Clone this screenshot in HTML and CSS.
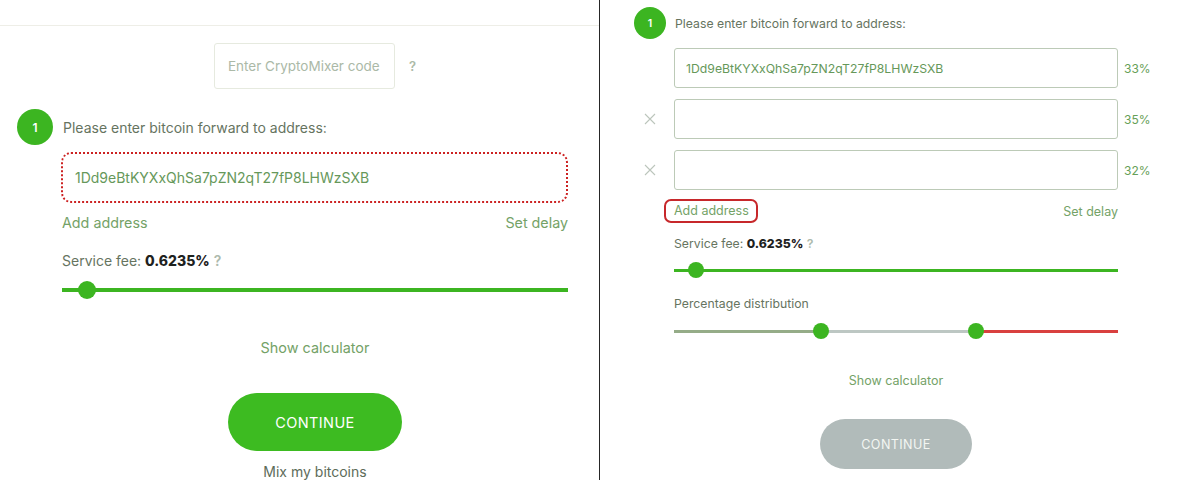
FILE: index.html
```html
<!DOCTYPE html>
<html lang="en">
<head>
<meta charset="utf-8">
<title>CryptoMixer</title>
<link rel="stylesheet" href="styles.css">
</head>
<body>
<div class="page">
  <section class="panel-left">
    <div class="topbar"></div>
    <div class="content">
      <div class="code-row">
        <div class="code-input">Enter CryptoMixer code</div>
        <span class="help">?</span>
      </div>
      <div class="step">
        <span class="badge">1</span>
        <span class="step-label">Please enter bitcoin forward to address:</span>
      </div>
      <div class="addr-box">1Dd9eBtKYXxQhSa7pZN2qT27fP8LHWzSXB</div>
      <div class="links">
        <span>Add address</span>
        <span>Set delay</span>
      </div>
      <div class="fee">Service fee: <b>0.6235%</b> <span class="q">?</span></div>
      <div class="slider">
        <span class="track"></span>
        <span class="thumb" style="left:5%"></span>
      </div>
      <div class="calc">Show calculator</div>
      <button class="continue">CONTINUE</button>
      <div class="mix">Mix my bitcoins</div>
    </div>
  </section>
  <div class="divider"></div>
  <section class="panel-right">
    <div class="r-step">
      <span class="r-badge">1</span>
      <span class="r-step-label">Please enter bitcoin forward to address:</span>
    </div>
    <div class="r-row first">
      <span class="x-cell"></span>
      <div class="r-input">1Dd9eBtKYXxQhSa7pZN2qT27fP8LHWzSXB</div>
      <span class="pct">33%</span>
    </div>
    <div class="r-row">
      <span class="x-cell"><svg width="12" height="12" viewBox="0 0 12 12"><path d="M1 1L11 11M11 1L1 11" stroke="#bcc5bc" stroke-width="1.1" fill="none"/></svg></span>
      <div class="r-input"></div>
      <span class="pct">35%</span>
    </div>
    <div class="r-row">
      <span class="x-cell"><svg width="12" height="12" viewBox="0 0 12 12"><path d="M1 1L11 11M11 1L1 11" stroke="#bcc5bc" stroke-width="1.1" fill="none"/></svg></span>
      <div class="r-input"></div>
      <span class="pct">32%</span>
    </div>
    <div class="r-body">
      <div class="r-links">
        <span class="add-hl">Add address</span>
        <span>Set delay</span>
      </div>
      <div class="r-fee">Service fee: <b>0.6235%</b> <span class="q">?</span></div>
      <div class="r-slider">
        <span class="track"></span>
        <span class="thumb" style="left:5%"></span>
      </div>
      <div class="r-label">Percentage distribution</div>
      <div class="r-dist">
        <span class="seg seg-a" style="width:33%"></span>
        <span class="seg seg-b" style="width:35%"></span>
        <span class="seg seg-c" style="width:32%"></span>
        <span class="thumb" style="left:33%"></span>
        <span class="thumb" style="left:68%"></span>
      </div>
      <div class="r-calc">Show calculator</div>
      <button class="r-continue">CONTINUE</button>
    </div>
  </section>
</div>
</body>
</html>
```

FILE: styles.css
```css
html, body {
  margin: 0;
  padding: 0;
}
body {
  font-family: Inter, "Liberation Sans", sans-serif;
  background: #fff;
  color: #66745f;
  width: 1200px;
  height: 480px;
  overflow: hidden;
}
.page {
  display: flex;
  height: 480px;
}

/* ---------- left panel ---------- */
.panel-left {
  width: 599px;
  flex: none;
}
.divider {
  width: 1px;
  flex: none;
  background: #262626;
}
.topbar {
  height: 25px;
  border-bottom: 1px solid #eeeee7;
}
.content {
  margin-left: 62px;
  width: 506px;
  display: flex;
  flex-direction: column;
}
.code-row {
  margin-top: 17px;
  display: flex;
  align-items: center;
  justify-content: center;
  gap: 14px;
}
.code-input {
  width: 181px;
  height: 46px;
  box-sizing: border-box;
  border: 1px solid #e6eadf;
  border-radius: 3px;
  padding-left: 13px;
  display: flex;
  align-items: center;
  font-size: 13.5px;
  color: #abb9a7;
}
.help {
  font-size: 13px;
  font-weight: 600;
  color: #acbaa7;
}
.step {
  margin-top: 20px;
  margin-left: -45px;
  height: 36px;
  display: flex;
  align-items: center;
}
.badge {
  width: 36px;
  height: 36px;
  border-radius: 50%;
  background: #3cb521;
  color: #fff;
  font-size: 12px;
  font-weight: 600;
  display: flex;
  align-items: center;
  justify-content: center;
  margin-right: 10px;
}
.step-label {
  font-size: 14px;
}
.addr-box {
  margin-top: 7px;
  margin-left: -1px;
  height: 51px;
  box-sizing: border-box;
  border: 2px dotted #cc2222;
  border-radius: 10px;
  padding-left: 12px;
  display: flex;
  align-items: center;
  font-size: 14px;
  color: #66985a;
}
.links {
  margin-top: 10px;
  display: flex;
  justify-content: space-between;
  line-height: 20px;
  font-size: 14.3px;
  color: #74a267;
}
.fee {
  margin-top: 18px;
  line-height: 20px;
  font-size: 14px;
}
.fee b, .r-fee b {
  font-weight: 800;
  color: #1e221e;
}
.q {
  font-weight: 600;
  color: #adbaad;
}
.slider {
  margin-top: 10px;
  height: 18px;
  position: relative;
  display: flex;
  align-items: center;
}
.slider .track {
  flex: 1;
  height: 4px;
  background: #3cb521;
}
.slider .thumb {
  position: absolute;
  top: 0;
  width: 18px;
  height: 18px;
  margin-left: -9px;
  border-radius: 50%;
  background: #3cb521;
}
.calc {
  margin-top: 39px;
  text-align: center;
  line-height: 20px;
  font-size: 14.4px;
  color: #74a267;
}
.continue {
  align-self: center;
  margin-top: 35px;
  width: 174px;
  height: 58px;
  border: 0;
  border-radius: 29px;
  background: #3dbb21;
  color: #fff;
  font-family: Inter, "Liberation Sans", sans-serif;
  font-size: 14.5px;
  font-weight: 400;
  letter-spacing: 0.4px;
  padding: 0;
}
.mix {
  margin-top: 11px;
  text-align: center;
  line-height: 20px;
  font-size: 14px;
  color: #5d6c5a;
}

/* ---------- right panel ---------- */
.panel-right {
  flex: 1;
  padding-left: 34px;
  padding-top: 7px;
}
.r-step {
  height: 32px;
  display: flex;
  align-items: center;
}
.r-badge {
  width: 32px;
  height: 32px;
  border-radius: 50%;
  background: #3cb521;
  color: #fff;
  font-size: 10.5px;
  font-weight: 600;
  display: flex;
  align-items: center;
  justify-content: center;
  margin-right: 9px;
}
.r-step-label {
  font-size: 12.25px;
}
.r-row {
  margin-top: 11px;
  height: 40px;
  display: flex;
  align-items: center;
}
.r-row.first {
  margin-top: 9px;
}
.x-cell {
  width: 32px;
  margin-right: 8px;
  display: flex;
  justify-content: center;
}
.r-input {
  width: 444px;
  height: 40px;
  box-sizing: border-box;
  border: 1px solid #bccab7;
  border-radius: 3px;
  padding-left: 11px;
  display: flex;
  align-items: center;
  font-size: 12.25px;
  color: #66985a;
}
.pct {
  margin-left: 6px;
  font-size: 12px;
  color: #66a057;
}
.r-body {
  margin-left: 40px;
  width: 444px;
  display: flex;
  flex-direction: column;
}
.r-links {
  margin-top: 9px;
  height: 24px;
  display: flex;
  justify-content: space-between;
  align-items: center;
  font-size: 12.5px;
  color: #74a267;
}
.add-hl {
  margin-left: -10px;
  height: 24px;
  box-sizing: border-box;
  border: 2px solid #c7282b;
  border-radius: 7px;
  padding: 0 7px 0 8px;
  line-height: 20px;
}
.r-fee {
  margin-top: 12px;
  line-height: 18px;
  font-size: 12.25px;
}
.r-slider {
  margin-top: 9px;
  height: 16px;
  position: relative;
  display: flex;
  align-items: center;
}
.r-slider .track {
  flex: 1;
  height: 3px;
  background: #3cb521;
}
.r-slider .thumb, .r-dist .thumb {
  position: absolute;
  top: 0;
  width: 16px;
  height: 16px;
  margin-left: -8px;
  border-radius: 50%;
  background: #3cb521;
}
.r-label {
  margin-top: 17px;
  line-height: 18px;
  font-size: 12.25px;
}
.r-dist {
  margin-top: 10px;
  height: 16px;
  position: relative;
  display: flex;
  align-items: center;
}
.seg {
  height: 3px;
}
.seg-a {
  background: #95ac88;
}
.seg-b {
  background: #bdc7c3;
}
.seg-c {
  background: #d9403f;
}
.r-calc {
  margin-top: 33px;
  text-align: center;
  line-height: 18px;
  font-size: 12.5px;
  color: #74a267;
}
.r-continue {
  align-self: center;
  margin-top: 29px;
  width: 152px;
  height: 50px;
  border: 0;
  border-radius: 25px;
  background: #b1bbba;
  color: #f3f6f2;
  font-family: Inter, "Liberation Sans", sans-serif;
  font-size: 12.6px;
  font-weight: 400;
  letter-spacing: 0.4px;
  padding: 0;
}
```
